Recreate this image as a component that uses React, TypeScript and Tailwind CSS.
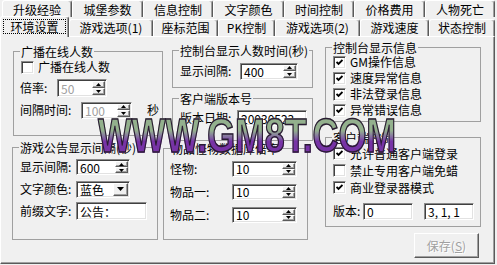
import type { ReactNode } from 'react'

// classic win32 bevels
const sunken =
  'border border-t-[#8a8a8a] border-l-[#8a8a8a] border-r-white border-b-white shadow-[inset_1px_1px_0_#404040,inset_-1px_-1px_0_#e2e2e2]'
const raised =
  'border border-t-white border-l-white border-r-[#5a5a5a] border-b-[#5a5a5a] shadow-[inset_-1px_-1px_0_#a0a0a0]'

const topTabs: [string, string][] = [
  ['升级经验', 'w-[70px]'],
  ['城堡参数', 'w-[71px]'],
  ['信息控制', 'w-[70px]'],
  ['文字颜色', 'w-[71px]'],
  ['时间控制', 'w-[70px]'],
  ['价格费用', 'w-[71px]'],
  ['人物死亡', 'w-[70px]'],
]

const frontTabs: [string, string][] = [
  ['游戏选项(1)', 'w-[84px]'],
  ['座标范围', 'w-[65px]'],
  ['PK控制', 'w-[57px]'],
  ['游戏选项(2)', 'w-[85px]'],
  ['游戏速度', 'w-[69px]'],
  ['状态控制', 'w-[66px]'],
]

function Group({ title, className, children }: { title: string; className: string; children?: ReactNode }) {
  return (
    <fieldset className={`shrink-0 border border-[#a0a0a0] ${className}`}>
      <legend className="ml-[6px] px-px leading-[13px]">{title}</legend>
      {children}
    </fieldset>
  )
}

function Check({ checked }: { checked?: boolean }) {
  return (
    <span className={`flex h-[13px] w-[13px] shrink-0 items-center justify-center bg-white ${sunken}`}>
      {checked && (
        <svg width="7" height="7" viewBox="0 0 7 7">
          <path d="M0.5 3 L2.5 5 L6.5 1" fill="none" stroke="#000" strokeWidth="1.9" />
        </svg>
      )}
    </span>
  )
}

function Arrow({ up }: { up?: boolean }) {
  return (
    <svg width="5" height="3" viewBox="0 0 5 3">
      <path d={up ? 'M2.5 0 L5 3 L0 3 Z' : 'M0 0 L5 0 L2.5 3 Z'} fill="#000" />
    </svg>
  )
}

function Spin({ value, className, disabled }: { value: string; className: string; disabled?: boolean }) {
  return (
    <div className={`flex shrink-0 bg-white p-px ${sunken} ${className}`}>
      <span className={`flex-1 self-center pl-[2px] leading-[13px] ${disabled ? 'text-[#a0a0a0]' : ''}`}>{value}</span>
      <div className="flex w-[13px] flex-col">
        <span className={`flex flex-1 items-center justify-center bg-[#f0f0f0] ${raised}`}>
          <Arrow up />
        </span>
        <span className={`flex flex-1 items-center justify-center bg-[#f0f0f0] ${raised}`}>
          <Arrow />
        </span>
      </div>
    </div>
  )
}

function Edit({ value, className }: { value: string; className: string }) {
  return (
    <div className={`flex shrink-0 items-center bg-white pl-[3px] leading-[13px] ${sunken} ${className}`}>{value}</div>
  )
}

function Row({ label, lw, children, className = '' }: { label: string; lw: string; children: ReactNode; className?: string }) {
  return (
    <div className={`flex items-center ${className}`}>
      <span className={`shrink-0 ${lw}`}>{label}</span>
      {children}
    </div>
  )
}

function CheckRow({ label, checked, className }: { label: string; checked?: boolean; className: string }) {
  return (
    <div className={`flex items-center pl-[7px] ${className}`}>
      <Check checked={checked} />
      <span className="ml-[4px] whitespace-nowrap">{label}</span>
    </div>
  )
}

export default function App() {
  return (
    <div className="relative h-[265px] w-[497px] overflow-hidden bg-[#f0f0f0] font-['Noto_Sans_CJK_SC','Noto_Sans',sans-serif] text-[12px] leading-[14px] text-black">
      {/* back row of tabs */}
      <div className="flex h-[17px] pl-[2px]">
        {topTabs.map(([t, w]) => (
          <div
            key={t}
            className={`${w} flex items-center justify-center rounded-t-[3px] border-l border-r border-t border-l-white border-t-white border-r-[#5a5a5a] pt-px shadow-[inset_-1px_0_0_#a0a0a0]`}
          >
            {t}
          </div>
        ))}
      </div>

      {/* front row, selected tab raised */}
      <div className="flex h-[19px] items-end">
        <div className="relative z-10 -mb-px flex h-[21px] w-[69px] items-start rounded-t-[3px] border-l border-r border-t border-l-white border-t-white border-r-[#5a5a5a] bg-[#f0f0f0] pt-[2px] shadow-[inset_-1px_0_0_#a0a0a0]">
          <span className="mx-[2px] flex h-[15px] flex-1 items-center justify-center border border-dotted border-black">
            环境设置
          </span>
        </div>
        {frontTabs.map(([t, w]) => (
          <div
            key={t}
            className={`${w} flex h-[17px] items-center justify-center rounded-t-[3px] border-l border-r border-t border-l-white border-t-white border-r-[#5a5a5a] shadow-[inset_-1px_0_0_#a0a0a0]`}
          >
            {t}
          </div>
        ))}
      </div>

      {/* tab page */}
      <div className={`flex h-[228px] w-[495px] items-start ${raised}`}>
        {/* left column */}
        <div className="ml-[11px] flex w-[151px] shrink-0 flex-col items-start">
          <Group title="广播在线人数" className="ml-px mt-[8px] h-[91px] w-[150px]">
            <CheckRow label="广播在线人数" className="mt-px h-[16px]" />
            <Row label="倍率:" lw="w-[37px]" className="mt-[4px] h-[18px] pl-[6px]">
              <Spin value="50" disabled className="h-[18px] w-[50px]" />
            </Row>
            <Row label="间隔时间:" lw="w-[61px]" className="mt-[4px] h-[18px] pl-[6px]">
              <Spin value="100" disabled className="h-[17px] w-[51px]" />
              <span className="ml-[15px]">秒</span>
            </Row>
          </Group>

          <Group title="游戏公告显示间隔(秒)" className="mt-[5px] h-[99px] w-[146px]">
            <div className="mt-[4px] flex flex-col gap-[4px] pl-[7px]">
              <Row label="显示间隔:" lw="w-[56px]" className="h-[18px]">
                <Spin value="600" className="h-[16px] w-[54px]" />
              </Row>
              <Row label="文字颜色:" lw="w-[56px]" className="h-[18px]">
                <div className={`flex h-[17px] w-[54px] shrink-0 bg-white p-px ${sunken}`}>
                  <span className="flex-1 self-center pl-[2px] leading-[13px]">蓝色</span>
                  <span className={`flex w-[15px] items-center justify-center bg-[#f0f0f0] ${raised}`}>
                    <svg width="7" height="4" viewBox="0 0 7 4">
                      <path d="M0 0 L7 0 L3.5 4 Z" fill="#000" />
                    </svg>
                  </span>
                </div>
              </Row>
              <Row label="前缀文字:" lw="w-[56px]" className="h-[18px]">
                <Edit value="公告：" className="h-[18px] w-[71px]" />
              </Row>
            </div>
          </Group>
        </div>

        {/* middle column */}
        <div className="flex w-[150px] shrink-0 flex-col items-start">
          <Group title="控制台显示人数时间(秒)" className="ml-[9px] mt-[7px] h-[44px] w-[141px]">
            <Row label="显示间隔:" lw="w-[60px]" className="mt-[5px] h-[18px] pl-[7px]">
              <Spin value="400" className="h-[17px] w-[58px]" />
            </Row>
          </Group>

          <Group title="客户端版本号" className="ml-[9px] mt-[4px] h-[49px] w-[141px]">
            <Row label="版本日期:" lw="w-[57px]" className="mt-[4px] h-[18px] pl-[7px]">
              <Edit value="20030523" className="h-[16px] w-[70px]" />
            </Row>
          </Group>

          <Group title="物品怪物数据库倍率" className="mt-px h-[98px] w-[145px]">
            <div className="mt-[5px] flex flex-col gap-[6px] pl-[6px]">
              {['怪物:', '物品一:', '物品二:'].map((l) => (
                <Row key={l} label={l} lw="w-[62px]" className="h-[17px]">
                  <Spin value="10" className="h-[16px] w-[65px]" />
                </Row>
              ))}
            </div>
          </Group>
        </div>

        {/* right column */}
        <div className="ml-[12px] flex w-[156px] shrink-0 flex-col items-start">
          <Group title="控制台显示信息" className="mt-[4px] h-[81px] w-[156px]">
            <CheckRow label="GM操作信息" checked className="h-[16px]" />
            <CheckRow label="速度异常信息" checked className="h-[16px]" />
            <CheckRow label="非法登录信息" checked className="h-[16px]" />
            <CheckRow label="异常错误信息" checked className="h-[16px]" />
          </Group>

          <Group title="客户端控制" className="mt-[9px] h-[96px] w-[156px]">
            <CheckRow label="允许普通客户端登录" checked className="mt-px h-[17px]" />
            <CheckRow label="禁止专用客户端免蜡" className="h-[17px]" />
            <CheckRow label="商业登录器模式" checked className="h-[17px]" />
            <Row label="版本:" lw="w-[30px]" className="mt-[6px] h-[18px] pl-[7px]">
              <Edit value="0" className="h-[17px] w-[50px]" />
              <Edit value="3, 1, 1" className="ml-[11px] h-[17px] w-[50px]" />
            </Row>
          </Group>

          <button
            disabled
            className={`ml-[89px] mt-[6px] flex h-[25px] w-[65px] items-center justify-center bg-[#f0f0f0] text-[#a0a0a0] [text-shadow:1px_1px_0_#fff] ${raised}`}
          >
            保存(<span className="underline">S</span>)
          </button>
        </div>
      </div>

      {/* site watermark stamped over the screenshot */}
      <div className="pointer-events-none absolute left-[98px] top-[111px] origin-left scale-x-[0.73] whitespace-nowrap bg-gradient-to-b from-[#93b08d] from-40% to-[#7733a6] to-62% bg-clip-text font-['Liberation_Sans',Arial,sans-serif] text-[49px] font-bold leading-none text-transparent [-webkit-text-stroke:1.5px_#2a1b33]">
        WWW.GM8T.COM
      </div>
    </div>
  )
}
